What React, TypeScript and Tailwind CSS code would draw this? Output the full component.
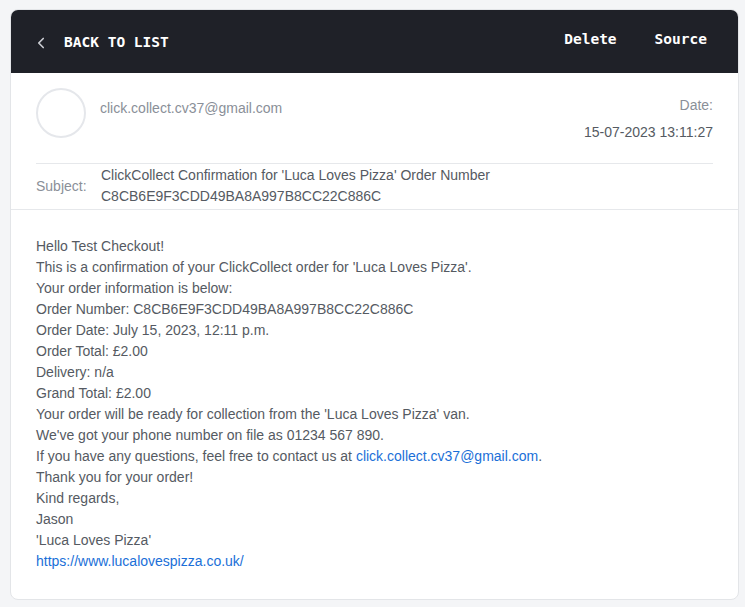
import { ChevronLeft } from 'lucide-react'

const lines: React.ReactNode[] = [
  'Hello Test Checkout!',
  "This is a confirmation of your ClickCollect order for 'Luca Loves Pizza'.",
  'Your order information is below:',
  'Order Number: C8CB6E9F3CDD49BA8A997B8CC22C886C',
  'Order Date: July 15, 2023, 12:11 p.m.',
  'Order Total: £2.00',
  'Delivery: n/a',
  'Grand Total: £2.00',
  "Your order will be ready for collection from the 'Luca Loves Pizza' van.",
  "We've got your phone number on file as 01234 567 890.",
  <>
    If you have any questions, feel free to contact us at{' '}
    <a className="text-[#1a6fd8]">click.collect.cv37@gmail.com</a>.
  </>,
  'Thank you for your order!',
  'Kind regards,',
  'Jason',
  "'Luca Loves Pizza'",
  <a className="text-[#1a6fd8]">https://www.lucalovespizza.co.uk/</a>,
]

export default function App() {
  return (
    <div className="min-h-screen bg-[#f4f5f7] pt-[9px] pl-[10px] font-['Liberation_Sans',Arial,sans-serif]">
      <div className="w-[729px] rounded-lg bg-white border border-[#e3e5e8] overflow-hidden">

        <div className="h-[64px] -mt-px -mx-px bg-[#1f2128] flex items-center pl-[22px] pr-[32px]
                        font-['DejaVu_Sans_Mono',monospace] font-bold text-[14.5px] text-white">
          <ChevronLeft className="w-[18px] h-[18px] text-[#c9cbd1] mt-[4px]" strokeWidth={2.25} />
          <span className="ml-[14px] mt-[4px]">BACK TO LIST</span>
          <div className="ml-auto flex gap-[38px] -mt-[3px]">
            <span>Delete</span>
            <span>Source</span>
          </div>
        </div>

        <div className="border-b border-[#e6e8eb] px-[25px]">
          <div className="flex pt-[15px] pb-[20px] border-b border-[#e6e8eb]">
            <div className="w-[50px] h-[50px] rounded-full border-2 border-[#e5e7eb] shrink-0" />
            <div className="ml-[14px] mt-[10px] text-[14px] text-[#8a8f98]">
              click.collect.cv37@gmail.com
            </div>
            <div className="ml-auto text-right text-[14px] mt-[7px]">
              <div className="text-[#8a8f98]">Date:</div>
              <div className="text-[#555a62] mt-[6px]">15-07-2023 13:11:27</div>
            </div>
          </div>
          <div className="flex items-center pt-[1px] pb-[2px] text-[14px] leading-[21px]">
            <span className="w-[65px] text-[#8a8f98] shrink-0">Subject:</span>
            <span className="text-[#555a62]">
              ClickCollect Confirmation for 'Luca Loves Pizza' Order Number<br />
              C8CB6E9F3CDD49BA8A997B8CC22C886C
            </span>
          </div>
        </div>

        <div className="px-[25px] pt-[26px] pb-[27px] text-[14px] leading-[21px] text-[#555a62]">
          {lines.map((l, i) => (
            <div key={i}>{l}</div>
          ))}
        </div>

      </div>
    </div>
  )
}
